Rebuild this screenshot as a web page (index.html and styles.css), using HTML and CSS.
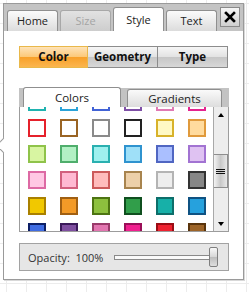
FILE: index.html
```html
<!DOCTYPE html>
<html lang="en">
<head>
    <meta charset="UTF-8">
    <meta name="viewport" content="width=device-width, initial-scale=1.0">
    <title>Style Panel</title>
    <link rel="stylesheet" href="styles.css">
</head>
<body>
    <div class="panel">
        <div class="header">
            <div class="tab">Home</div>
            <div class="tab disabled">Size</div>
            <div class="tab active">Style</div>
            <div class="tab">Text</div>
            <div class="close">
                <svg width="12" height="12" viewBox="0 0 12 12">
                    <path d="M2 2 L10 10 M10 2 L2 10" stroke="#000" stroke-width="2.6" stroke-linecap="square"/>
                </svg>
            </div>
        </div>

        <div class="content">
            <div class="segments">
                <div class="seg on">Color</div>
                <div class="seg">Geometry</div>
                <div class="seg">Type</div>
            </div>

            <div class="tabbox">
                <div class="subtabs">
                    <div class="subtab active">Colors</div>
                    <div class="subtab">Gradients</div>
                </div>
                <div class="pane">
                    <div class="swatch-view">
                        <div class="swatches" id="swatches"></div>
                    </div>
                    <div class="scrollbar">
                        <div class="arrow up"></div>
                        <div class="track">
                            <div class="thumb">
                                <span></span><span></span><span></span>
                            </div>
                        </div>
                        <div class="arrow down"></div>
                    </div>
                </div>
            </div>

            <div class="opacity">
                <span class="opacity-label">Opacity:&nbsp; 100%</span>
                <div class="slider">
                    <div class="slider-track"></div>
                    <div class="slider-thumb"></div>
                </div>
            </div>
        </div>
    </div>

    <script>
        // fill, border
        var colors = [
            ["#ffffff", "#1fb3b0"], ["#ffffff", "#2aa3d8"], ["#ffffff", "#4263d6"], ["#ffffff", "#7e4fa6"], ["#ffffff", "#e079b4"], ["#ffffff", "#e4238f"],
            ["#ffffff", "#e5212b"], ["#ffffff", "#9a6424"], ["#ffffff", "#8a8a8a"], ["#ffffff", "#222222"], ["#fff9c4", "#d8b22a"], ["#ffdb9e", "#e09a3c"],
            ["#d8f5a2", "#8fc34a"], ["#b2f0c4", "#4fae6c"], ["#9ef0ee", "#2ab0b0"], ["#9fe0f8", "#2f93cf"], ["#aabfff", "#5066c2"], ["#dfc2f2", "#a273d2"],
            ["#ffc8e4", "#dd6aa4"], ["#ffb9d2", "#d2607e"], ["#ffbcbc", "#cc5b5b"], ["#edd0a9", "#a8844e"], ["#eeeeee", "#b4b4b4"], ["#878787", "#333333"],
            ["#f1c800", "#a98000"], ["#f39a27", "#a05f12"], ["#8dc03e", "#4d7412"], ["#319e4a", "#0f4f1f"], ["#17b0a8", "#0d6e6a"], ["#26a1dd", "#0f5282"],
            ["#3f6ce2", "#0c1f66"], ["#7f4fa0", "#3b1a5a"], ["#e276b0", "#9a3a6a"], ["#f0208f", "#9a0e58"], ["#ee2230", "#9a0c14"], ["#9d6428", "#5a340c"]
        ];

        var html = "";
        colors.forEach(function (c) {
            html += '<div class="swatch" style="background:' + c[0] + ';border-color:' + c[1] + '"></div>';
        });
        document.getElementById("swatches").innerHTML = html;
    </script>
</body>
</html>
```

FILE: styles.css
```css
body {
    margin: 0;
    padding: 3px 0 0 3px;
    font-family: "Open Sans", "Noto Sans", sans-serif;
    font-size: 11px;
    color: #222;
    background-color: #fff;
    background-image:
        linear-gradient(#ececec 1px, transparent 1px),
        linear-gradient(90deg, #ececec 1px, transparent 1px);
    background-size: 20px 20px;
    background-position: 6px 3px;
    height: 292px;
    box-sizing: border-box;
    overflow: hidden;
}

.panel {
    position: relative;
    width: 241px;
    height: 277px;
    box-sizing: border-box;
    border: 1px solid #9a9a9a;
    background: #fff;
    box-shadow: 1px 1px 0 #d8d8d8;
}

/* callout pointer on the left edge */
.panel::before {
    content: "";
    position: absolute;
    left: -6px;
    top: 136px;
    width: 10px;
    height: 10px;
    background: #fff;
    border-left: 1px solid #9a9a9a;
    border-bottom: 1px solid #9a9a9a;
    transform: rotate(45deg);
}

.header {
    display: flex;
    align-items: flex-end;
    height: 27px;
    padding: 0 3px;
    background: #c4c4c4;
}

.tab {
    width: 51px;
    height: 21px;
    margin-right: 2px;
    box-sizing: border-box;
    border: 1px solid #8f8f8f;
    border-bottom: none;
    border-radius: 3px 3px 0 0;
    background: linear-gradient(#fbfbfb, #dcdcdc);
    text-align: center;
    font-size: 11px;
    line-height: 20px;
}

.tab.disabled {
    color: #a4a4a4;
    background: linear-gradient(#e2e2e2, #cdcdcd);
    border-color: #a8a8a8;
}

.tab.active {
    height: 24px;
    background: #fff;
    line-height: 23px;
}

.close {
    align-self: flex-start;
    margin: 3px 0 0 auto;
    width: 20px;
    height: 20px;
    box-sizing: border-box;
    border: 1px solid #8a8a8a;
    background: linear-gradient(#f6f6f6, #cfcfcf);
    display: flex;
    align-items: center;
    justify-content: center;
}

.content {
    padding: 15px 14px 8px 15px;
}

.segments {
    display: flex;
    height: 22px;
}

.seg {
    width: 70px;
    box-sizing: border-box;
    border: 1px solid #8c8c8c;
    background: linear-gradient(#f6f6f6 0%, #e2e2e2 50%, #c6c6c6 51%, #d8d8d8 100%);
    font-weight: bold;
    font-size: 11.5px;
    text-align: center;
    line-height: 20px;
    color: #111;
}

.seg + .seg {
    border-left: none;
}

.seg.on {
    width: 69px;
    border-color: #e9b84a;
    background: linear-gradient(#fee3b8 0%, #fcc877 50%, #f8a029 51%, #fbb54e 100%);
}

.tabbox {
    margin-top: 20px;
}

.subtabs {
    display: flex;
    align-items: flex-end;
    height: 19px;
    padding-left: 4px;
    background: #c3c3c3;
}

.subtab {
    width: 95px;
    height: 18px;
    box-sizing: border-box;
    border: 1px solid #8f8f8f;
    border-bottom: none;
    border-radius: 3px 3px 0 0;
    background: linear-gradient(#fafafa, #dddddd);
    text-align: center;
    font-size: 11.5px;
    line-height: 17px;
}

.subtab.active {
    width: 98px;
    height: 20px;
    margin-right: 6px;
    background: #fff;
    line-height: 19px;
}

.pane {
    display: flex;
    height: 125px;
    box-sizing: border-box;
    border: 1px solid #9c9c9c;
    border-top: none;
}

.swatch-view {
    flex: 1;
    overflow: hidden;
}

.swatches {
    display: grid;
    grid-template-columns: repeat(6, 18px);
    column-gap: 14px;
    row-gap: 8px;
    padding-left: 8px;
    margin-top: -14px;
}

.swatch {
    width: 18px;
    height: 18px;
    box-sizing: border-box;
    border: 2px solid;
}

.scrollbar {
    width: 14px;
    display: flex;
    flex-direction: column;
    border-left: 1px solid #a8a8a8;
    background: #ededed;
}

.arrow {
    height: 15px;
    display: flex;
    align-items: center;
    justify-content: center;
}

.arrow::after {
    content: "";
    border-left: 3px solid transparent;
    border-right: 3px solid transparent;
}

.arrow.up::after {
    border-bottom: 4px solid #000;
}

.arrow.down::after {
    border-top: 4px solid #000;
}

.track {
    flex: 1;
    padding-top: 32px;
}

.thumb {
    height: 34px;
    box-sizing: border-box;
    border: 1px solid #8e8e8e;
    border-left: none;
    background: linear-gradient(90deg, #f4f4f4, #c8c8c8 50%, #e8e8e8);
    display: flex;
    flex-direction: column;
    justify-content: center;
    align-items: center;
    gap: 1px;
}

.thumb span {
    display: block;
    width: 9px;
    height: 1px;
    background: #111;
}

.opacity {
    display: flex;
    align-items: center;
    margin-top: 11px;
    height: 28px;
    box-sizing: border-box;
    border: 1px solid #a2a2a2;
    background: #e6e6e6;
    padding-left: 8px;
}

.opacity-label {
    font-size: 11px;
    color: #333;
}

.slider {
    position: relative;
    margin-left: auto;
    margin-right: 10px;
    width: 104px;
    height: 20px;
}

.slider-track {
    position: absolute;
    left: 0;
    right: 2px;
    top: 8px;
    height: 5px;
    box-sizing: border-box;
    border: 1px solid #8a8a8a;
    background: #fafafa;
}

.slider-thumb {
    position: absolute;
    right: 0;
    top: 0;
    width: 9px;
    height: 20px;
    box-sizing: border-box;
    border: 1px solid #7f7f7f;
    border-radius: 2px;
    background: linear-gradient(#f8f8f8, #d6d6d6 50%, #bcbcbc 51%, #dedede);
}
```
